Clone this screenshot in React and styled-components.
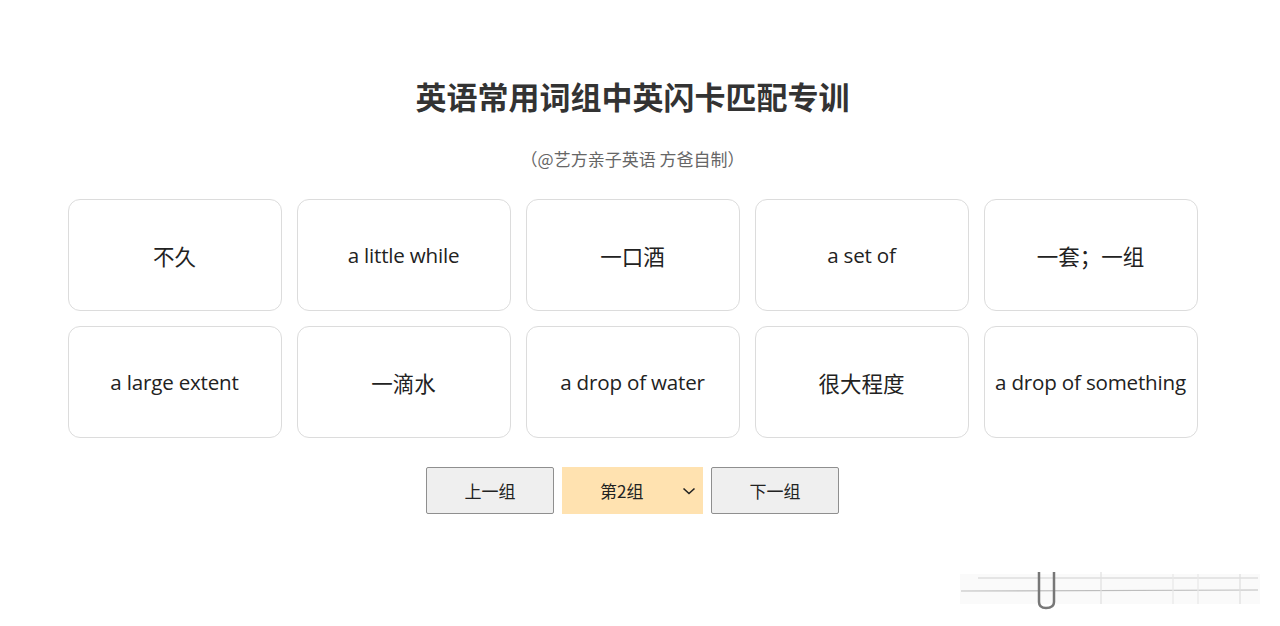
import React from "react";
import styled, { createGlobalStyle } from "styled-components";

const Global = createGlobalStyle`
  html, body { margin: 0; padding: 0; background: #fff; }
  body { font-family: "Open Sans", "Noto Sans CJK SC", sans-serif; }
`;

const Page = styled.div`
  width: 1265px;
  height: 626px;
  position: relative;
  display: flex;
  flex-direction: column;
  align-items: center;
  padding-top: 74px;
  box-sizing: border-box;
`;

const Title = styled.h1`
  margin: 0;
  font-family: "Noto Sans CJK SC", sans-serif;
  font-weight: 700;
  font-size: 31px;
  line-height: 44px;
  color: #333;
`;

const Subtitle = styled.p`
  margin: 29px 0 0;
  font-family: "Noto Sans CJK SC", sans-serif;
  font-size: 17px;
  line-height: 24px;
  color: #666;
`;

const Grid = styled.div`
  margin-top: 28px;
  display: grid;
  grid-template-columns: repeat(5, 214px);
  grid-auto-rows: 112px;
  gap: 15px;
`;

const Card = styled.div`
  border: 1.5px solid #dcdcdc;
  border-radius: 12px;
  box-sizing: border-box;
  display: flex;
  align-items: center;
  justify-content: center;
  font-family: "Open Sans", "Noto Sans CJK SC", sans-serif;
  font-size: ${(p) => (p.$zh ? "21.5px" : "20.6px")};
  color: #222;
  white-space: nowrap;
  letter-spacing: ${(p) => (p.$zh ? "0" : "-0.2px")};
`;

const Controls = styled.div`
  margin-top: 29px;
  display: flex;
  gap: 8px;
  align-items: center;
`;

const NavButton = styled.button`
  width: 128px;
  height: 47px;
  border: 1px solid #8f8f8f;
  border-radius: 2px;
  background: #efefef;
  font-family: "Noto Sans CJK SC", sans-serif;
  font-size: 17px;
  color: #222;
  padding: 0;
`;

const SelectBox = styled.div`
  width: 141px;
  height: 47px;
  background: #ffe2b0;
  display: flex;
  align-items: center;
  justify-content: space-between;
  box-sizing: border-box;
  padding: 0 5px 0 38px;
  font-family: "Noto Sans CJK SC", sans-serif;
  font-size: 17px;
  color: #222;
`;

const Watermark = styled.svg`
  position: absolute;
  left: 958px;
  top: 568px;
`;

const cards = [
  ["不久", true],
  ["a little while", false],
  ["一口酒", true],
  ["a set of", false],
  ["一套；一组", true],
  ["a large extent", false],
  ["一滴水", true],
  ["a drop of water", false],
  ["很大程度", true],
  ["a drop of something", false],
];

export default function App() {
  return (
    <>
      <Global />
      <Page>
        <Title>英语常用词组中英闪卡匹配专训</Title>
        <Subtitle>（@艺方亲子英语 方爸自制）</Subtitle>
        <Grid>
          {cards.map(([t, zh]) => (
            <Card key={t} $zh={zh}>
              {t}
            </Card>
          ))}
        </Grid>
        <Controls>
          <NavButton>上一组</NavButton>
          <SelectBox>
            <span>第2组</span>
            <svg width="18" height="18" viewBox="0 0 18 18">
              <path d="M3.5 6.5 L9 11.5 L14.5 6.5" fill="none" stroke="#222" strokeWidth="1.6" />
            </svg>
          </SelectBox>
          <NavButton>下一组</NavButton>
        </Controls>
        <Watermark width="305" height="46" viewBox="0 0 305 46">
          <rect x="2" y="6" width="300" height="30" fill="#f7f7f7" opacity="0.6" />
          <line x1="20" y1="10" x2="300" y2="10" stroke="#d0d0d0" strokeWidth="1.2" />
          <line x1="3" y1="23" x2="300" y2="22" stroke="#bdbdbd" strokeWidth="1.2" />
          <path d="M81 4 V34 Q81 40 88 40 Q96 40 96 34 V4" fill="none" stroke="#777" strokeWidth="2.5" />
          <line x1="143" y1="4" x2="143" y2="36" stroke="#e0e0e0" strokeWidth="1.2" />
          <line x1="215" y1="6" x2="215" y2="36" stroke="#e8e8e8" strokeWidth="1.2" />
          <line x1="240" y1="6" x2="240" y2="36" stroke="#e8e8e8" strokeWidth="1.2" />
          <line x1="282" y1="6" x2="282" y2="36" stroke="#dedede" strokeWidth="1.2" />
        </Watermark>
      </Page>
    </>
  );
}
